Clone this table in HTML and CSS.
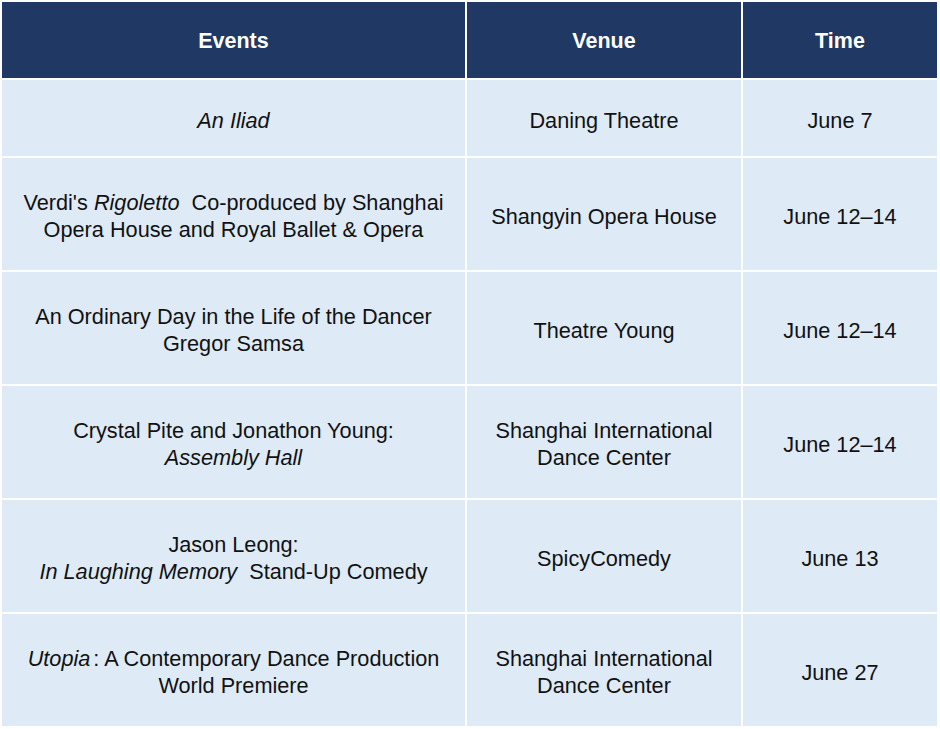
FILE: index.html
```html
<!DOCTYPE html>
<html>
<head>
<meta charset="utf-8">
<link rel="stylesheet" href="styles.css">
</head>
<body>
<div class="table">
  <div class="cell head">Events</div>
  <div class="cell head">Venue</div>
  <div class="cell head">Time</div>

  <div class="cell"><i>An Iliad</i></div>
  <div class="cell">Daning Theatre</div>
  <div class="cell">June 7</div>

  <div class="cell"><span>Verdi's <i>Rigoletto</i>&nbsp; Co-produced by Shanghai<br>Opera House and Royal Ballet &amp; Opera</span></div>
  <div class="cell">Shangyin Opera House</div>
  <div class="cell">June 12–14</div>

  <div class="cell"><span>An Ordinary Day in the Life of the Dancer<br>Gregor Samsa</span></div>
  <div class="cell">Theatre Young</div>
  <div class="cell">June 12–14</div>

  <div class="cell"><span>Crystal Pite and Jonathon Young:<br><i>Assembly Hall</i></span></div>
  <div class="cell"><span>Shanghai International<br>Dance Center</span></div>
  <div class="cell">June 12–14</div>

  <div class="cell"><span>Jason Leong:<br><i>In Laughing Memory</i>&nbsp; Stand-Up Comedy</span></div>
  <div class="cell">SpicyComedy</div>
  <div class="cell">June 13</div>

  <div class="cell"><span><i class="tight">Utopia</i>: A Contemporary Dance Production<br>World Premiere</span></div>
  <div class="cell"><span>Shanghai International<br>Dance Center</span></div>
  <div class="cell">June 27</div>
</div>
</body>
</html>
```
FILE: styles.css
```css
html, body {
  margin: 0;
  padding: 0;
  background: #ffffff;
}
.table {
  display: grid;
  grid-template-columns: 463px 274px 194px;
  grid-template-rows: 76px 76px repeat(5, 112px);
  gap: 2px;
  padding: 2px;
  width: 935px;
  font-family: "Liberation Sans", Arial, sans-serif;
  font-size: 21.7px;
  line-height: 27px;
  color: #111111;
}
.cell {
  background: #deebf7;
  display: flex;
  align-items: center;
  justify-content: center;
  text-align: center;
  padding-top: 4px;
}
.cell.head {
  background: #203864;
  color: #ffffff;
  font-weight: bold;
  font-size: 21.5px;
  padding-top: 2px;
}
.tight {
  margin-right: 3px;
}
```
